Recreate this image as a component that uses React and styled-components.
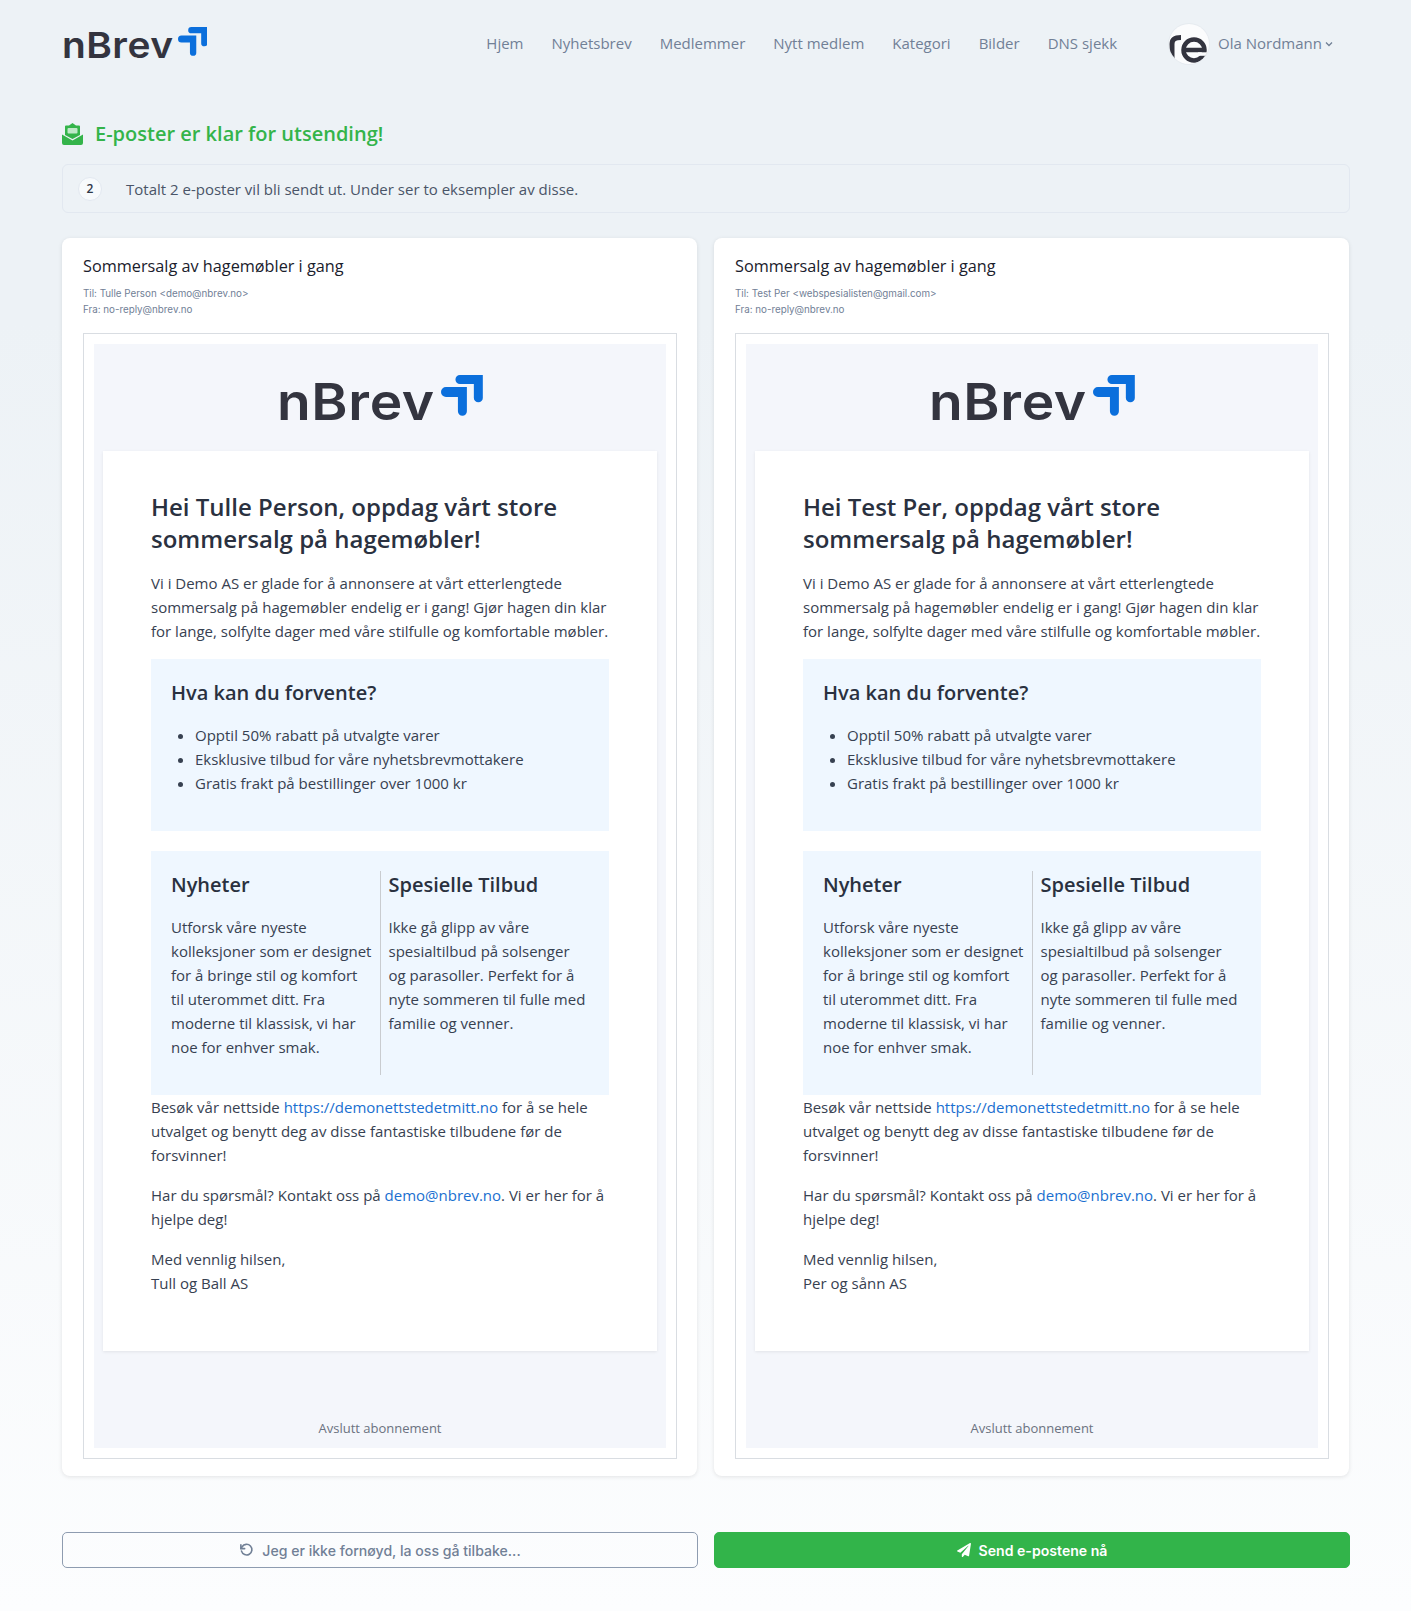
import React from 'react';
import styled, { createGlobalStyle } from 'styled-components';

const GlobalStyle = createGlobalStyle`
  html, body {
    margin: 0;
    padding: 0;
  }
  body {
    font-family: "Open Sans", "Liberation Sans", sans-serif;
    background: linear-gradient(180deg, #edf2f6 0%, #edf2f6 20%, #fcfdfe 100%);
    min-height: 1611px;
  }
`;

const Page = styled.div`
  width: 1288px;
  margin-left: 62px;
`;

const Header = styled.header`
  display: flex;
  align-items: center;
  height: 88px;
`;

const LogoWrap = styled.div`
  display: inline-flex;
  align-items: flex-end;
  gap: ${p => p.$size * 0.15}px;
  line-height: 1;
`;

const LogoWord = styled.span`
  display: inline-block;
  width: ${p => p.$size * 3.06}px;
  white-space: nowrap;
  font-family: Inter, "Liberation Sans", sans-serif;
  font-weight: 600;
  font-size: ${p => p.$size}px;
  letter-spacing: ${p => p.$size * 0.012}px;
  color: #33343f;
  line-height: ${p => p.$size * 0.9}px;
  transform: scaleX(1.08);
  transform-origin: left center;
`;

const LogoMark = styled.svg`
  width: ${p => p.$size * 0.82}px;
  height: ${p => p.$size * 0.82}px;
  margin-bottom: ${p => p.$size * 0.15}px;
`;

const Logo = ({ size }) => (
  <LogoWrap $size={size}>
    <LogoWord $size={size}>nBrev</LogoWord>
    <LogoMark $size={size} viewBox="0 0 42 42">
      <path d="M19 0H42V23A4.500 4.500 0 0 1 33 23V9H19A4.500 4.500 0 0 1 19 0Z" fill="#0b6fdc" />
      <path d="M5 12H26V36.500A4.500 4.500 0 0 1 17 36.500V22H5A5 5 0 0 1 5 12Z" fill="#0b6fdc" />
    </LogoMark>
  </LogoWrap>
);

const Nav = styled.nav`
  display: flex;
  align-items: center;
  margin-left: auto;
  margin-bottom: 2px;
  gap: 28px;
  font-size: 15px;
  color: #718096;
`;

const NavItem = styled.a`
  color: #718096;
`;

const UserBox = styled.div`
  display: flex;
  align-items: center;
  gap: 9px;
  margin-left: 52px;
  margin-right: 16px;
  font-size: 15px;
  color: #718096;
`;

const UserName = styled.span`
  margin-bottom: 2px;
`;

const Avatar = styled.div`
  width: 40px;
  height: 40px;
  border-radius: 50%;
  background: #fbfcfd;
  box-shadow: 0 0 0 1px #e6ebf0;
  overflow: hidden;
  flex: none;
`;

const Chevron = styled.svg`
  margin-left: -7px;
`;

const Title = styled.h1`
  display: flex;
  align-items: center;
  gap: 12px;
  margin: 32px 0 16px;
  font-size: 20px;
  line-height: 28px;
  font-weight: 600;
  color: #34b44a;
`;

const Notice = styled.div`
  display: flex;
  align-items: center;
  height: 47px;
  padding-left: 15px;
  border: 1px solid #e2e8f0;
  border-radius: 6px;
  font-size: 15px;
  color: #4a5568;
`;

const Count = styled.span`
  display: flex;
  align-items: center;
  justify-content: center;
  width: 22px;
  height: 22px;
  margin-right: 24px;
  border-radius: 50%;
  background: #f7fafc;
  border: 1px solid #e2e8f0;
  font-size: 12px;
  font-weight: 600;
  color: #2d3748;
`;

const Cards = styled.div`
  display: grid;
  grid-template-columns: 635px 635px;
  gap: 17px;
  margin-top: 25px;
`;

const Card = styled.section`
  background: #fff;
  border-radius: 8px;
  box-shadow: 0 1px 4px rgba(0, 0, 0, 0.1);
  padding: 16px 20px 17px 21px;
`;

const Subject = styled.div`
  font-size: 16.25px;
  line-height: 24px;
  color: #1a202c;
`;

const Meta = styled.div`
  font-family: Inter, "Liberation Sans", sans-serif;
  font-size: 9.8px;
  line-height: 16px;
  color: #718096;
  &:nth-of-type(2) {
    margin-top: 8px;
  }
`;

const Frame = styled.div`
  margin-top: 15px;
  border: 1px solid #d9dde2;
  padding: 10px;
`;

const MailBg = styled.div`
  background: #f4f6fb;
  padding: 0 9px;
`;

const MailHead = styled.div`
  display: flex;
  justify-content: center;
  align-items: flex-start;
  height: 107px;
  padding-top: 31px;
  box-sizing: border-box;
`;

const MailBody = styled.div`
  background: #fff;
  box-shadow: 0 1px 3px rgba(0, 0, 0, 0.08);
  padding: 40px 48px;
  font-size: 15px;
  line-height: 24px;
  color: #374151;
`;

const Heading = styled.h2`
  margin: 0 0 16px;
  font-size: 24px;
  line-height: 32px;
  font-weight: 600;
  color: #2a3140;
`;

const Para = styled.p`
  margin: 0 0 16px;
`;

const Link = styled.a`
  color: #1a6fd0;
`;

const InfoBox = styled.div`
  background: #eff7ff;
  padding: 20px;
  margin-bottom: 20px;
`;

const BoxTitle = styled.h3`
  margin: 0 0 16px;
  font-size: 20px;
  line-height: 28px;
  font-weight: 600;
  color: #2a3140;
`;

const List = styled.ul`
  margin: 0 0 16px;
  padding-left: 24px;
`;

const Columns = styled.div`
  display: grid;
  grid-template-columns: 210px 1fr;
  background: #eff7ff;
  padding: 20px;
`;

const Column = styled.div`
  padding-left: ${p => (p.$second ? '7.5px' : '0')};
  padding-right: ${p => (p.$second ? '0' : '8px')};
  border-right: ${p => (p.$second ? 'none' : '1px solid #c9ccd0')};
`;

const MailFoot = styled.div`
  height: 97px;
  padding-bottom: 9px;
  box-sizing: border-box;
  display: flex;
  align-items: flex-end;
  justify-content: center;
  font-size: 13px;
  line-height: 22px;
  color: #6b7280;
`;

const Actions = styled.div`
  display: grid;
  grid-template-columns: 636px 636px;
  gap: 16px;
  margin-top: 56px;
`;

const Button = styled.button`
  display: flex;
  align-items: center;
  justify-content: center;
  gap: 8px;
  height: 36px;
  border-radius: 5px;
  font-family: Inter, "Liberation Sans", sans-serif;
  font-size: 14.1px;
  font-weight: ${p => (p.$primary ? 600 : 500)};
  color: ${p => (p.$primary ? '#fff' : '#718096')};
  background: ${p => (p.$primary ? '#32b44a' : 'transparent')};
  border: ${p => (p.$primary ? '1px solid #32b44a' : '1px solid #8e9cb0')};
`;

const navItems = ['Hjem', 'Nyhetsbrev', 'Medlemmer', 'Nytt medlem', 'Kategori', 'Bilder', 'DNS sjekk'];

const mails = [
  {
    to: 'Tulle Person <demo@nbrev.no>',
    name: 'Tulle Person',
    sign: 'Tull og Ball AS',
  },
  {
    to: 'Test Per <webspesialisten@gmail.com>',
    name: 'Test Per',
    sign: 'Per og sånn AS',
  },
];

const Mail = ({ to, name, sign }) => (
  <Card>
    <Subject>Sommersalg av hagemøbler i gang</Subject>
    <Meta>Til: {to}</Meta>
    <Meta>Fra: no-reply@nbrev.no</Meta>
    <Frame>
      <MailBg>
        <MailHead>
          <Logo size={51} />
        </MailHead>
        <MailBody>
          <Heading>Hei {name}, oppdag vårt store sommersalg på hagemøbler!</Heading>
          <Para>
            Vi i Demo AS er glade for å annonsere at vårt etterlengtede sommersalg på hagemøbler endelig er i gang! Gjør hagen din klar for lange, solfylte dager med våre stilfulle og komfortable møbler.
          </Para>
          <InfoBox>
            <BoxTitle>Hva kan du forvente?</BoxTitle>
            <List>
              <li>Opptil 50% rabatt på utvalgte varer</li>
              <li>Eksklusive tilbud for våre nyhetsbrevmottakere</li>
              <li>Gratis frakt på bestillinger over 1000 kr</li>
            </List>
          </InfoBox>
          <Columns>
            <Column>
              <BoxTitle>Nyheter</BoxTitle>
              <Para>Utforsk våre nyeste kolleksjoner som er designet for å bringe stil og komfort til uterommet ditt. Fra moderne til klassisk, vi har noe for enhver smak.</Para>
            </Column>
            <Column $second>
              <BoxTitle>Spesielle Tilbud</BoxTitle>
              <Para>Ikke gå glipp av våre spesialtilbud på solsenger og parasoller. Perfekt for å nyte sommeren til fulle med familie og venner.</Para>
            </Column>
          </Columns>
          <Para>
            Besøk vår nettside <Link>https://demonettstedetmitt.no</Link> for å se hele utvalget og benytt deg av disse fantastiske tilbudene før de forsvinner!
          </Para>
          <Para>
            Har du spørsmål? Kontakt oss på <Link>demo@nbrev.no</Link>. Vi er her for å hjelpe deg!
          </Para>
          <Para>
            Med vennlig hilsen,<br />{sign}
          </Para>
        </MailBody>
        <MailFoot>Avslutt abonnement</MailFoot>
      </MailBg>
    </Frame>
  </Card>
);

export default function App() {
  return (
    <Page>
      <GlobalStyle />
      <Header>
        <Logo size={36} />
        <Nav>
          {navItems.map(item => <NavItem key={item}>{item}</NavItem>)}
        </Nav>
        <UserBox>
          <Avatar>
            <svg width="40" height="40" viewBox="0 0 40 40">
              <path d="M3 36V20C3 15 6 13.500 12 13.500" fill="none" stroke="#33343f" strokeWidth="5" />
              <circle cx="25" cy="26" r="10.500" fill="none" stroke="#33343f" strokeWidth="4.500" />
              <path d="M14 26H36" stroke="#33343f" strokeWidth="4.500" />
              <rect x="29" y="28.300" width="12" height="3.500" fill="#fbfcfd" />
            </svg>
          </Avatar>
          <UserName>Ola Nordmann</UserName>
          <Chevron width="10" height="10" viewBox="0 0 10 10">
            <path d="M2 3.500L5 6.500L8 3.500" fill="none" stroke="#718096" strokeWidth="1.300" />
          </Chevron>
        </UserBox>
      </Header>
      <Title>
        <svg width="21" height="22" viewBox="0 0 21 22">
          <path d="M10.500 0L14 2.500H17A1 1 0 0 1 18 3.500V12L10.500 16L3 12V3.500A1 1 0 0 1 4 2.500H7Z" fill="#34b44a" />
          <rect x="5.500" y="5" width="10" height="5.500" rx="1" fill="#bfe8c8" />
          <path d="M0 11.500L10.500 17.500L21 11.500V20A2 2 0 0 1 19 22H2A2 2 0 0 1 0 20Z" fill="#34b44a" />
        </svg>
        E-poster er klar for utsending!
      </Title>
      <Notice>
        <Count>2</Count>
        Totalt 2 e-poster vil bli sendt ut. Under ser to eksempler av disse.
      </Notice>
      <Cards>
        {mails.map(mail => <Mail key={mail.name} {...mail} />)}
      </Cards>
      <Actions>
        <Button>
          <svg width="15" height="15" viewBox="0 0 24 24" fill="none" stroke="#718096" strokeWidth="2.600" strokeLinecap="round" strokeLinejoin="round">
            <path d="M3 3v6h6" />
            <path d="M4 13a8.500 8.500 0 1 0 1-7L3 9" />
          </svg>
          Jeg er ikke fornøyd, la oss gå tilbake...
        </Button>
        <Button $primary>
          <svg width="14" height="14" viewBox="0 0 512 512">
            <path fill="#fff" d="M476 3L12 271c-18 10-16 36 3 44l107 45L411 105c5-5 13 2 8 8L176 409v81c0 24 29 33 43 16l64-78 126 53c14 6 31-3 33-18L510 28c3-20-18-35-34-25z" />
          </svg>
          Send e-postene nå
        </Button>
      </Actions>
    </Page>
  );
}
